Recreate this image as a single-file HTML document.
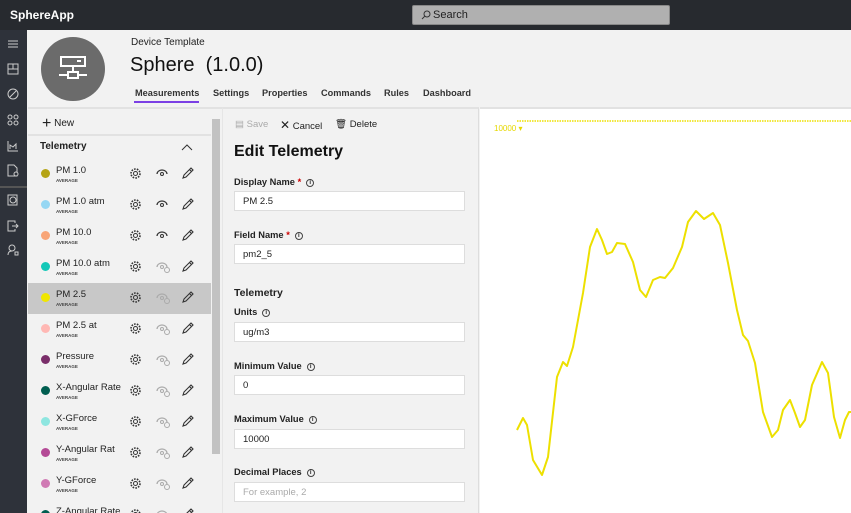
<!DOCTYPE html>
<html><head><style>
*{box-sizing:border-box;margin:0;padding:0}
html,body{width:851px;height:513px;overflow:hidden}
body{background:#f2f2f2;font-family:"Liberation Sans",sans-serif;position:relative;color:#222}
.top{position:absolute;left:0;top:0;width:851px;height:30px;background:#272a2f;}
.brand{position:absolute;left:10px;top:8px;color:#fff;font-weight:bold;font-size:12px}
.search{position:absolute;left:412px;top:5px;width:258px;height:20px;background:#b0b0b0;border:1px solid #888;border-radius:2px;font-size:11px;color:#222;padding:3px 0 0 20px}
.nav{position:absolute;left:0;top:30px;width:27px;height:483px;background:#2e323a}
.nav svg{position:absolute;left:7px}
.hdr{position:absolute;left:27px;top:30px;width:824px;height:77px;background:#f2f2f2}
.avatar{position:absolute;left:41px;top:37px;width:64px;height:64px;border-radius:50%;background:#6b6b6b}
.abs{position:absolute;white-space:nowrap}
.tab{font-size:9.2px;font-weight:bold;color:#333;top:88px}
.list{position:absolute;left:28px;top:107px;width:194px;height:406px;background:#f2f2f2;border-top:2px solid #e2e2e2}
#rows{position:absolute;left:0;top:0;width:851px;height:513px;overflow:hidden}
.row{position:absolute;left:0;width:183px;height:31px}
.dot{position:absolute;left:13px;top:10px;width:9px;height:9px;border-radius:50%}
.lbl{position:absolute;left:28px;top:6px;font-size:9.5px;color:#222}
.avg{position:absolute;left:28px;top:19px;font-size:4.5px;font-weight:bold;color:#444}
.ic{position:absolute;top:8px}
.form{position:absolute;left:222px;top:107px;width:257px;height:406px;border-left:1px solid #e6e6e6;border-right:1px solid #ddd;border-top:2px solid #e2e2e2}
.fl{font-size:9.3px;font-weight:bold;color:#222;left:234px}
.inp{position:absolute;left:234px;width:231px;height:20px;background:#fff;border:1px solid #ddd;font-size:9.5px;padding:4px 8px;color:#222}
.chart{position:absolute;left:480px;top:107px;width:371px;height:406px;background:#fff;border-top:2px solid #e2e2e2}
.info{display:inline-block;width:8px;height:8px;border:1px solid #444;border-radius:50%;font-size:6px;text-align:center;line-height:6px;font-weight:bold;vertical-align:1px;margin-left:5px}
</style></head><body>
<div class="top"><div class="brand">SphereApp</div>
<div class="search"><svg style="position:absolute;left:8px;top:4px" width="10" height="10" viewBox="0 0 10 10"><circle cx="6" cy="4" r="3" fill="none" stroke="#333" stroke-width="1"/><line x1="4" y1="6" x2="1" y2="9" stroke="#333"/></svg>Search</div></div>
<div class="nav">
<svg style="top:9px" width="12" height="10"><path d="M1 2h10M1 5h10M1 8h10" stroke="#ccc" stroke-width="1"/></svg>
<svg style="top:33px" width="12" height="12"><rect x="1" y="1" width="10" height="10" fill="none" stroke="#ccc"/><path d="M1 6h10M6 1v5" stroke="#ccc"/></svg>
<svg style="top:58px" width="12" height="12"><circle cx="6" cy="6" r="5" fill="none" stroke="#ccc"/><path d="M3 9L9 3" stroke="#ccc"/></svg>
<svg style="top:84px" width="12" height="12"><circle cx="3" cy="3" r="2" fill="none" stroke="#ccc"/><circle cx="9" cy="3" r="2" fill="none" stroke="#ccc"/><circle cx="3" cy="9" r="2" fill="none" stroke="#ccc"/><circle cx="9" cy="9" r="2" fill="none" stroke="#ccc"/></svg>
<svg style="top:110px" width="12" height="12"><path d="M1 1v10h10M3 9V5l3 2 3-3v5" fill="none" stroke="#ccc"/></svg>
<svg style="top:134px" width="12" height="13"><path d="M1 1h6l3 3v8H1z" fill="none" stroke="#ccc"/><circle cx="9" cy="10" r="2" fill="#2e323a" stroke="#ccc"/></svg>
<div style="position:absolute;left:0;top:156px;width:27px;height:2px;background:#555"></div>
<svg style="top:164px" width="12" height="12"><rect x="1" y="1" width="9" height="10" fill="none" stroke="#ccc"/><circle cx="6" cy="6" r="3" fill="none" stroke="#ccc"/></svg>
<svg style="top:190px" width="12" height="12"><path d="M8 3V1H1v10h7V9M5 6h6M9 4l2 2-2 2" fill="none" stroke="#ccc"/></svg>
<svg style="top:214px" width="12" height="13"><circle cx="5" cy="4" r="3" fill="none" stroke="#ccc"/><path d="M1 11c0-3 2-4 4-4" fill="none" stroke="#ccc"/><rect x="8" y="8" width="3" height="3" fill="none" stroke="#ccc"/></svg>
</div>
<div class="hdr"></div>
<div class="avatar"><svg style="position:absolute;left:16px;top:16px" width="32" height="32" viewBox="0 0 32 32"><rect x="4" y="4" width="24" height="9" fill="none" stroke="#fff" stroke-width="2"/><rect x="20" y="7" width="4" height="2" fill="#fff"/><path d="M16 13v6M11 19h10v6H11zM2 22h9M21 22h9" fill="none" stroke="#fff" stroke-width="2"/></svg></div>
<div class="abs" style="left:131px;top:37px;font-size:10px;color:#222">Device Template</div>
<div class="abs" style="left:130px;top:54px;font-size:20px;color:#111">Sphere&nbsp; (1.0.0)</div>
<div class="abs tab" style="left:135px">Measurements</div>
<div class="abs" style="left:134px;top:101px;width:65px;height:2px;background:#7b3fe4"></div>
<div class="abs tab" style="left:213px">Settings</div>
<div class="abs tab" style="left:262px">Properties</div>
<div class="abs tab" style="left:321px">Commands</div>
<div class="abs tab" style="left:384px">Rules</div>
<div class="abs tab" style="left:423px">Dashboard</div>

<div class="list">
<div class="abs" style="left:14px;top:6px;font-size:10px;color:#222"><span style="font-size:16px;vertical-align:-2px;font-weight:300">+</span> New</div>
<div class="abs" style="left:0;top:25px;width:183px;height:2px;background:#e2e2e2"></div>
<div class="abs" style="left:12px;top:32px;font-size:10px;font-weight:bold">Telemetry</div>
<svg class="abs" style="left:153px;top:34px" width="12" height="8"><path d="M1 7l5-5 5 5" fill="none" stroke="#333"/></svg>
<div class="abs" style="left:183px;top:0;width:11px;height:406px;background:#f2f2f2"></div>
<div class="abs" style="left:184px;top:10px;width:8px;height:335px;background:#c2c2c2"></div>
</div>
<div id="rows"></div>
<div class="form">
<div class="abs" style="left:12px;top:10px;font-size:9.5px;color:#aaa">▤ Save</div>
<div class="abs" style="left:57px;top:9px;font-size:9.5px;color:#222"><span style="font-size:12px">✕</span> Cancel</div>
<div class="abs" style="left:112px;top:10px;font-size:9.5px;color:#222">🗑 Delete</div>
</div>
<div class="abs" style="left:234px;top:143px;font-size:16px;font-weight:bold;color:#111">Edit Telemetry</div>
<div class="abs fl" style="top:177px">Display Name <span style="color:#c00">*</span><span class="info">i</span></div>
<div class="inp" style="top:191px">PM 2.5</div>
<div class="abs fl" style="top:230px">Field Name <span style="color:#c00">*</span><span class="info">i</span></div>
<div class="inp" style="top:244px">pm2_5</div>
<div class="abs" style="left:234px;top:287px;font-size:10.5px;font-weight:bold">Telemetry</div>
<div class="abs fl" style="top:307px">Units<span class="info">i</span></div>
<div class="inp" style="top:322px">ug/m3</div>
<div class="abs fl" style="top:361px">Minimum Value<span class="info">i</span></div>
<div class="inp" style="top:375px">0</div>
<div class="abs fl" style="top:414px">Maximum Value<span class="info">i</span></div>
<div class="inp" style="top:429px">10000</div>
<div class="abs fl" style="top:467px">Decimal Places<span class="info">i</span></div>
<div class="inp" style="top:482px;color:#aaa">For example, 2</div>

<div class="chart"></div>
<svg class="abs" style="left:0;top:0" width="851" height="513">
<line x1="517" y1="121" x2="851" y2="121" stroke="#ede000" stroke-width="1.5" stroke-dasharray="1.5,1"/>
<text x="494" y="131" font-size="8" fill="#e6d800" font-family="Liberation Sans">10000 ▾</text>
<polyline fill="none" stroke="#ede000" stroke-width="2" stroke-linejoin="round" points="517,430 523,418 527,425 533,460 542,475 548,457 557,377 563,362 567,366 573,347 583,293 590,247 597,229 602,240 607,254 612,252 617,243 625,244 633,262 640,290 646,297 653,280 660,277 665,278 673,268 682,247 688,222 696,211 704,219 713,213 720,225 728,263 737,310 743,335 748,341 755,363 763,412 772,437 778,430 783,410 790,400 795,413 800,427 805,420 812,385 822,362 828,373 834,417 840,438 845,420 849,412 851,412"/>
</svg>
<script>
var d=[["PM 1.0","#b5a415",1],["PM 1.0 atm","#96d7f3",1],["PM 10.0","#f8a577",1],["PM 10.0 atm","#14c8b8",0],["PM 2.5","#f0e600",0],["PM 2.5 at","#ffb8b4",0],["Pressure","#7a2e6a",0],["X-Angular Rate","#005e50",0],["X-GForce","#8ee6e0",0],["Y-Angular Rat","#b44a96",0],["Y-GForce","#d07ab4",0],["Z-Angular Rate","#005e50",0]];
var h="";
d.forEach(function(r,i){var t=159+i*31;
var eye=r[2]?'<svg class="ic" style="left:127px" width="14" height="12"><path d="M2 7a5 4 0 0 1 10 0" fill="none" stroke="#333" stroke-width="1.2"/><circle cx="7" cy="7" r="1.5" fill="none" stroke="#333"/></svg>':'<svg class="ic" style="left:127px" width="16" height="14"><path d="M2 7a5 4 0 0 1 10 0" fill="none" stroke="#aaa" stroke-width="1.2"/><circle cx="7" cy="7" r="1.5" fill="none" stroke="#aaa"/><circle cx="12" cy="10" r="2.5" fill="none" stroke="#aaa"/></svg>';
h+='<div class="row" style="left:28px;top:'+t+'px;'+(i==4?'background:#c8c8c8':'')+'"><div class="dot" style="background:'+r[1]+'"></div><div class="lbl">'+r[0]+'</div><div class="avg">AVERAGE</div>'+
'<svg class="ic" style="left:101px" width="13" height="13" viewBox="0 0 13 13"><circle cx="6.5" cy="6.5" r="2" fill="none" stroke="#333"/><circle cx="6.5" cy="6.5" r="4.5" fill="none" stroke="#333" stroke-width="1.6" stroke-dasharray="1.6,1.2"/></svg>'+eye+
'<svg class="ic" style="left:153px" width="13" height="13"><path d="M2 11l1-3 7-7 2 2-7 7z M8.5 2.5l2 2" fill="none" stroke="#333" stroke-width="1.1"/></svg></div>';});
document.getElementById("rows").innerHTML=h;
</script>
</body></html>
